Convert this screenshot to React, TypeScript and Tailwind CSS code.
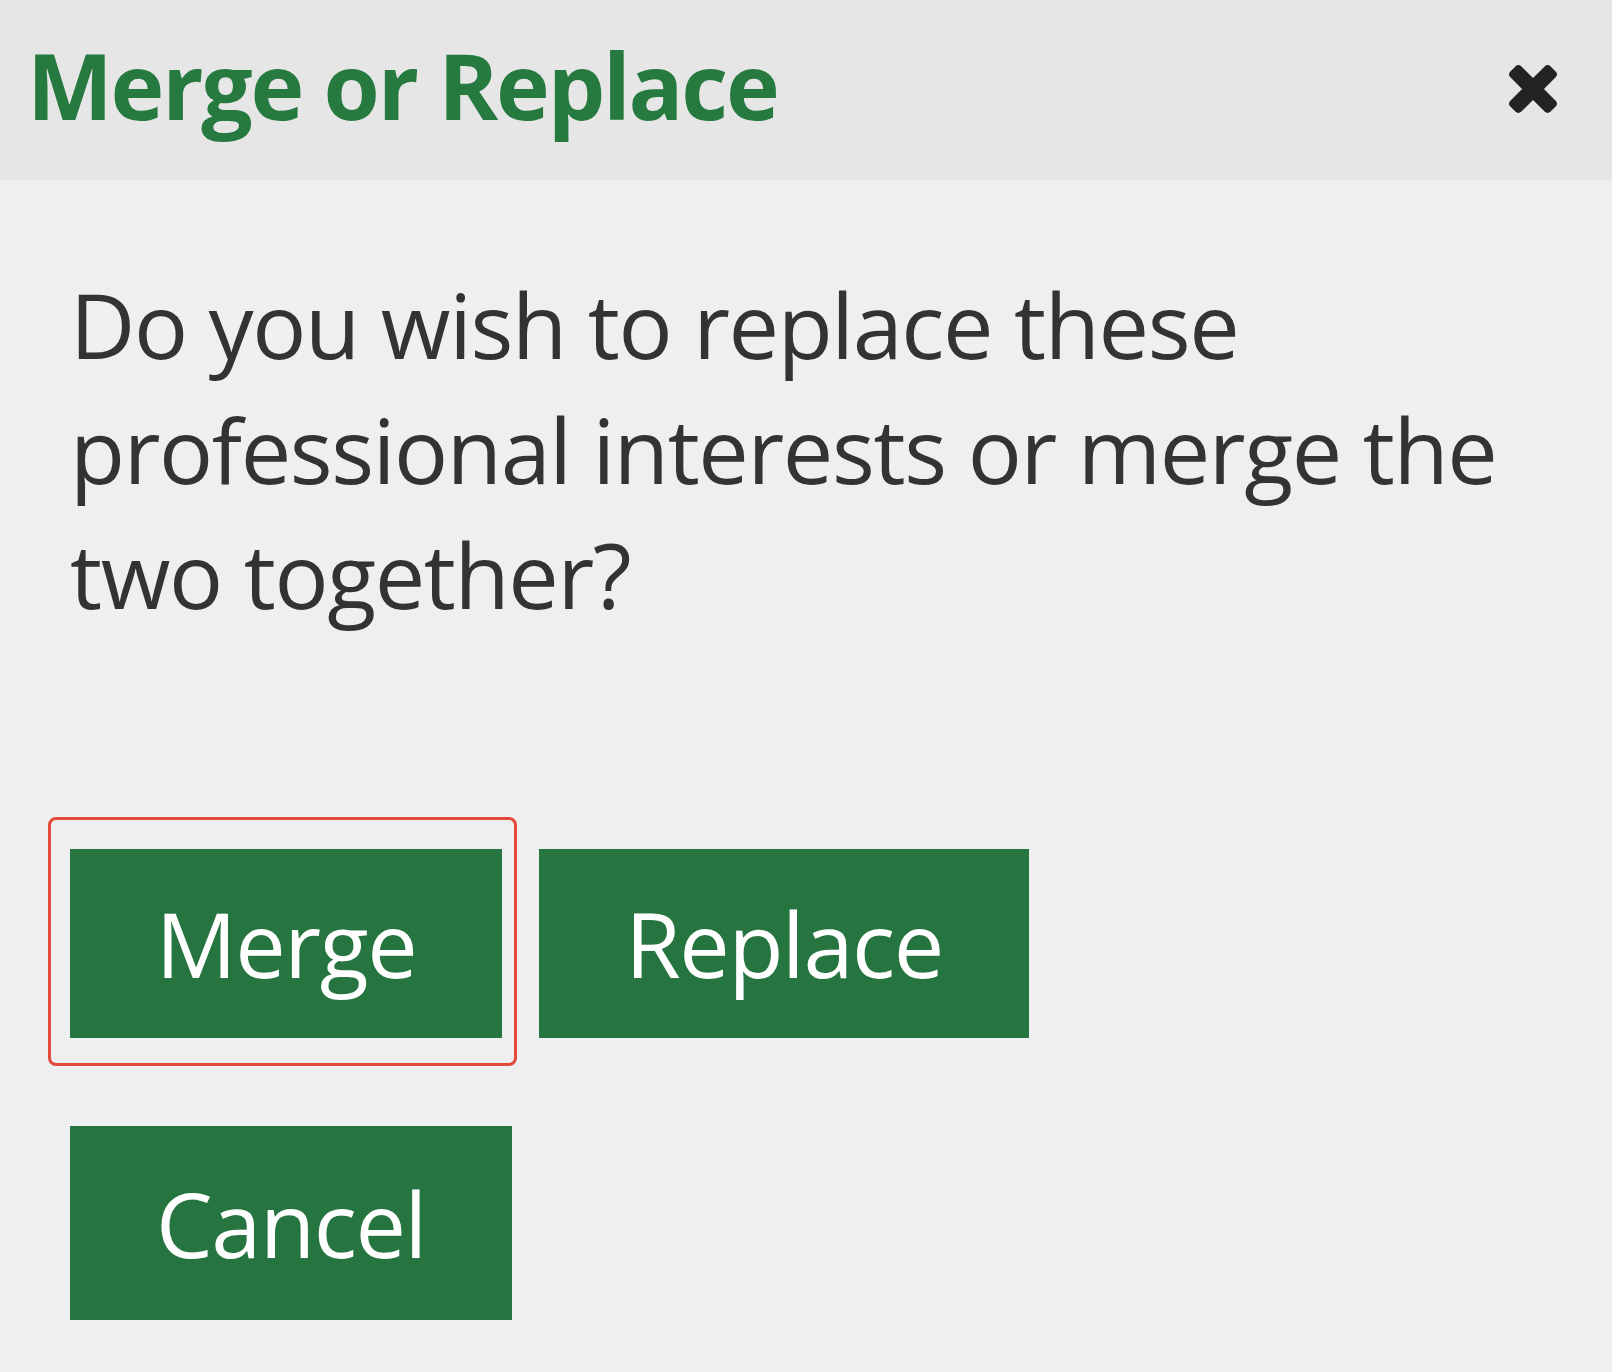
import React from "react";

function CloseIcon() {
  return (
    <svg viewBox="110 258 1188 1188" className="w-[48px] h-[48px]" fill="#232323">
      <path d="M1298 1214q0 40-28 68l-136 136q-28 28-68 28t-68-28l-294-294-294 294q-28 28-68 28t-68-28l-136-136q-28-28-28-68t28-68l294-294-294-294q-28-28-28-68t28-68l136-136q28-28 68-28t68 28l294 294 294-294q28-28 68-28t68 28l136 136q28 28 28 68t-28 68l-294 294 294 294q28 28 28 68z" />
    </svg>
  );
}

const btn =
  "bg-[#267540] text-white text-[90px] leading-[125px] tracking-[-1.4px] flex items-center justify-center";

export default function App() {
  return (
    <div className="w-full min-h-[1372px] bg-[#efefef] font-['Open_Sans',sans-serif] flex flex-col">
      {/* Header */}
      <div className="h-[180px] bg-[#e6e6e6] flex items-center justify-between pl-[27px] pr-[55px]">
        <h1 className="text-[91px] leading-none font-bold tracking-[-2.2px] text-[#267a3f] -mt-[10px]">
          Merge or Replace
        </h1>
        <button className="-mt-[3px]" title="Close">
          <CloseIcon />
        </button>
      </div>

      {/* Body */}
      <div className="px-[70px] pt-[82px]">
        <p className="text-[90px] leading-[125px] tracking-[-1.4px] text-[#333333] pr-[40px]">
          Do you wish to replace these professional interests or merge the two together?
        </p>

        <div className="mt-[212px] flex items-center gap-[37px]">
          <div className="relative">
            <button className={`${btn} w-[432px] h-[189px]`}>Merge</button>
            {/* focus ring */}
            <div className="absolute -top-[32px] -bottom-[28px] -left-[22px] -right-[15px] border-[3px] border-[#e24b3b] rounded-[8px] pointer-events-none" />
          </div>
          <button className={`${btn} w-[490px] h-[189px]`}>Replace</button>
        </div>

        <div className="mt-[88px]">
          <button className={`${btn} w-[442px] h-[194px]`}>Cancel</button>
        </div>
      </div>
    </div>
  );
}
